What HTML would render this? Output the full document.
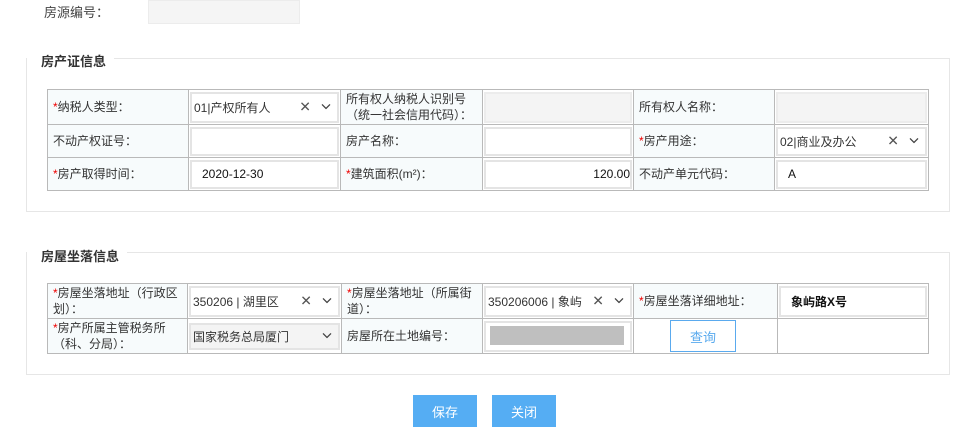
<!DOCTYPE html>
<html><head><meta charset="utf-8"><style>
*{box-sizing:border-box;margin:0;padding:0}
body{width:967px;height:431px;background:#fff;font-family:"Liberation Sans","Noto Sans CJK SC",sans-serif;font-size:12px;color:#333;position:relative;overflow:hidden}
.a{position:absolute}
.fs{position:absolute;border:1px solid #e6e6e6}
.lg{position:absolute;background:#fff;font-weight:bold;font-size:13px;color:#333;padding:0 8px 0 14px}
table{position:absolute;border-collapse:collapse;table-layout:fixed}
td{border:1px solid #b9b9b9;padding:0;vertical-align:middle}
td.l{background:#f7fbfc;padding-left:5px;line-height:16px}
.r{color:#e00}
.in{margin:0 1px;border:2px solid #e4e4e4;display:flex;align-items:center;padding-left:2px;position:relative;background:#fff}
.h1{height:31px}.h2{height:29px}
.gr{background:#f4f4f4}
.x{position:absolute;right:26px;top:50%;transform:translateY(-50%);color:#555;font-size:14px}
.v{position:absolute;right:6px;top:50%;transform:translateY(-60%)}
.btn{position:absolute;background:#55adf3;color:#fff;font-size:13px;display:flex;align-items:center;justify-content:center}
</style></head><body>
<div class="a" style="left:44px;top:2px;font-size:13px;color:#444">房源编号：</div>
<div class="a" style="left:148px;top:0;width:152px;height:24px;background:#f5f5f5;border:1px solid #ececec"></div>

<div class="fs" style="left:26px;top:58px;width:924px;height:154px"></div>
<div class="lg" style="left:27px;top:51px">房产证信息</div>
<table style="left:47px;top:89px;width:882px">
<colgroup><col style="width:141px"><col style="width:152px"><col style="width:142px"><col style="width:151px"><col style="width:141px"><col></colgroup>
<tr style="height:35px"><td class="l"><span class="r">*</span>纳税人类型：</td><td><div class="in h1">01|产权所有人<span class="x">✕</span><svg class="v" width="10" height="6"><path d="M1 1L5 5L9 1" stroke="#444" fill="none" stroke-width="1.3"/></svg></div></td><td class="l">所有权人纳税人识别号<br>（统一社会信用代码）：</td><td><div class="in gr h1" style="border-color:#ececec"></div></td><td class="l">所有权人名称：</td><td><div class="in gr h1" style="border-color:#ececec"></div></td></tr>
<tr style="height:33px"><td class="l">不动产权证号：</td><td><div class="in h2"></div></td><td class="l">房产名称：</td><td><div class="in h2"></div></td><td class="l"><span class="r">*</span>房产用途：</td><td><div class="in h2">02|商业及办公<span class="x">✕</span><svg class="v" width="10" height="6"><path d="M1 1L5 5L9 1" stroke="#444" fill="none" stroke-width="1.3"/></svg></div></td></tr>
<tr style="height:33px"><td class="l"><span class="r">*</span>房产取得时间：</td><td><div class="in h2" style="padding-left:10px;color:#111">2020-12-30</div></td><td class="l"><span class="r">*</span>建筑面积(m²)：</td><td><div class="in h2" style="justify-content:flex-end;padding-right:0;color:#111">120.00</div></td><td class="l">不动产单元代码：</td><td><div class="in h2" style="padding-left:10px;color:#111">A</div></td></tr>
</table>

<div class="fs" style="left:26px;top:252px;width:924px;height:123px"></div>
<div class="lg" style="left:27px;top:246px">房屋坐落信息</div>
<table style="left:47px;top:283px;width:882px">
<colgroup><col style="width:140px"><col style="width:154px"><col style="width:141px"><col style="width:151px"><col style="width:144px"><col></colgroup>
<tr style="height:35px"><td class="l"><span class="r">*</span>房屋坐落地址（行政区划）：</td><td><div class="in h1">350206 | 湖里区<span class="x">✕</span><svg class="v" width="10" height="6"><path d="M1 1L5 5L9 1" stroke="#444" fill="none" stroke-width="1.3"/></svg></div></td><td class="l"><span class="r">*</span>房屋坐落地址（所属街道）：</td><td><div class="in h1">350206006 | 象屿<span class="x">✕</span><svg class="v" width="10" height="6"><path d="M1 1L5 5L9 1" stroke="#444" fill="none" stroke-width="1.3"/></svg></div></td><td class="l"><span class="r">*</span>房屋坐落详细地址：</td><td><div class="in h1" style="padding-left:10px;color:#111;font-weight:bold">象屿路X号</div></td></tr>
<tr style="height:35px"><td class="l"><span class="r">*</span>房产所属主管税务所（科、分局）：</td><td><div class="in gr" style="height:27px">国家税务总局厦门<svg class="v" width="10" height="6"><path d="M1 1L5 5L9 1" stroke="#444" fill="none" stroke-width="1.3"/></svg></div></td><td class="l">房屋所在土地编号：</td><td><div class="in h1" style="padding:0 4px;align-items:flex-start;padding-top:3px"><div style="width:134px;height:19px;background:#bfbfbf"></div></div></td><td style="position:relative"><div class="a" style="left:36px;top:1px;width:66px;height:32px;border:1px solid #5aaaee;color:#5aaaee;font-size:13px;display:flex;align-items:center;justify-content:center">查询</div></td><td></td></tr>
</table>

<div class="btn" style="left:413px;top:395px;width:64px;height:32px">保存</div>
<div class="btn" style="left:492px;top:395px;width:64px;height:32px">关闭</div>
</body></html>
